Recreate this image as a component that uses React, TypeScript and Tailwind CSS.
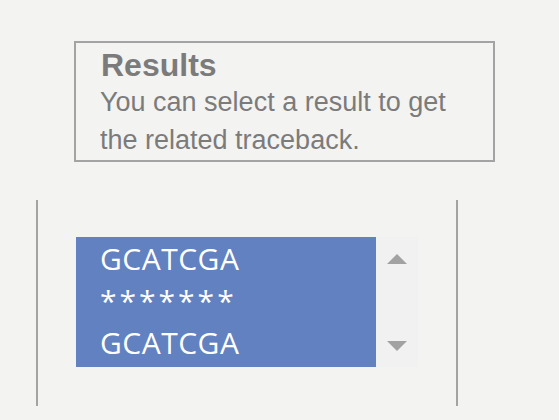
import React from "react";

const rows = ["GCATCGA", "*******", "GCATCGA"];

const Arrow: React.FC<{ dir: "up" | "down" }> = ({ dir }) => (
  <svg width="20" height="10" viewBox="0 0 20 10" className="block">
    {dir === "up" ? (
      <polygon points="10,0 20,10 0,10" fill="#a2a2a2" />
    ) : (
      <polygon points="0,0 20,0 10,10" fill="#a2a2a2" />
    )}
  </svg>
);

export default function App() {
  return (
    <div className="w-[559px] h-[420px] overflow-hidden bg-[#f3f3f1] flex flex-col">
      <div
        className="ml-[74px] mt-[41px] w-[421px] h-[121px] border-2 border-[#a3a3a3] pl-[25px] pt-[4px] text-[#7b7b7b]"
        style={{ fontFamily: '"Liberation Sans", Arial, sans-serif' }}
      >
        <div className="text-[32px] leading-[36px] font-bold">Results</div>
        <p className="text-[27px] leading-[38px] -ml-[1px]">
          You can select a result to get
          <br />
          the related traceback.
        </p>
      </div>

      <div className="ml-[36px] mt-[38px] w-[422px] h-[206px] border-x-2 border-[#a3a3a3] pl-[38px] pt-[37px]">
        <div className="flex">
          <div
            className="w-[300px] h-[130px] bg-[#6281c1] text-white pl-[24px] pt-[1px] text-[30px] leading-[42px]"
            style={{ fontFamily: '"Open Sans", "Noto Sans", sans-serif' }}
          >
            {rows.map((r, i) => (
              <div key={i} className={r.startsWith("*") ? "tracking-[3px]" : "tracking-[0.5px]"}>
                {r}
              </div>
            ))}
          </div>
          <div className="w-[42px] h-[130px] bg-[#f1f1f1] flex flex-col items-start pl-[11px] pt-[17px]">
            <Arrow dir="up" />
            <div className="h-[77px]" />
            <Arrow dir="down" />
          </div>
        </div>
      </div>
    </div>
  );
}
